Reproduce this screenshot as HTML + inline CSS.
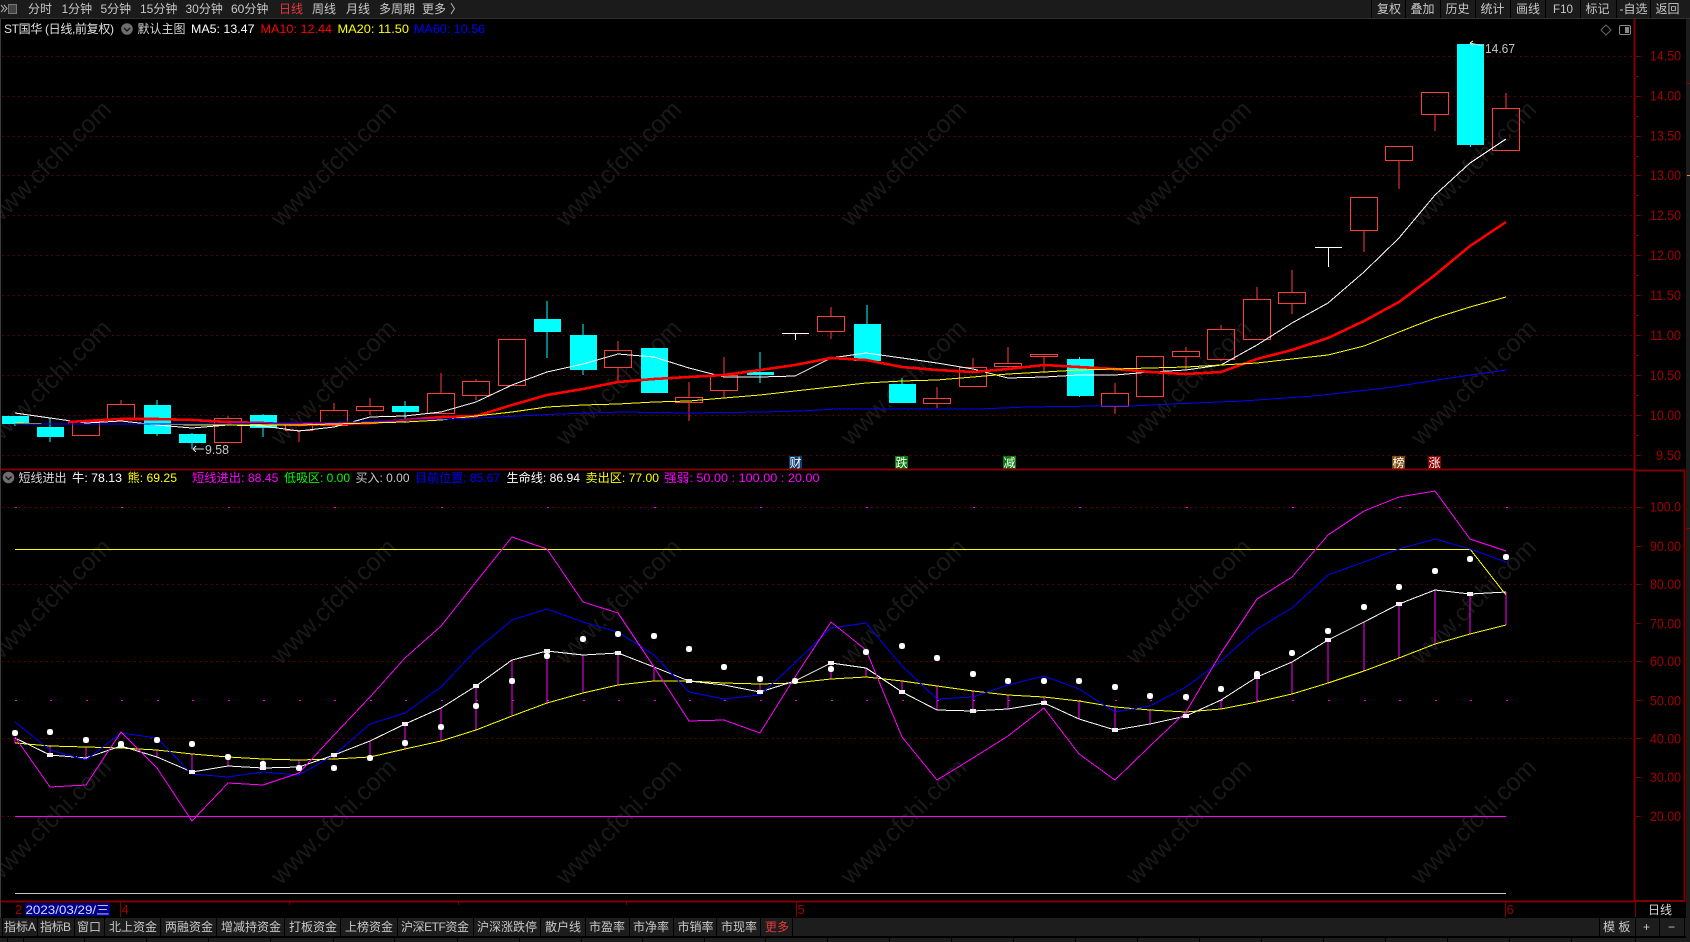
<!DOCTYPE html>
<html><head><meta charset="utf-8"><title>ST国华</title>
<style>
html,body{margin:0;padding:0;background:#000;width:1690px;height:942px;overflow:hidden}
svg{display:block}
text{font-family:"Liberation Sans","Noto Sans CJK SC","WenQuanYi Zen Hei",sans-serif;font-size:12px}
.w text{font-size:25px;fill:#191919;text-anchor:middle}
.t text{fill:#c8c8c8}
.a text{fill:#a00000;font-size:14px}
.l{fill:none;shape-rendering:crispEdges}
</style></head><body>
<svg width="1690" height="942" viewBox="0 0 1690 942" xmlns="http://www.w3.org/2000/svg">
<rect width="1690" height="942" fill="#000"/>

<g class="w" transform="translate(-6 6)">
<text x="54" y="166" transform="rotate(-45 54 157)">www.cfchi.com</text><text x="339" y="166" transform="rotate(-45 339 157)">www.cfchi.com</text><text x="624" y="166" transform="rotate(-45 624 157)">www.cfchi.com</text><text x="909" y="166" transform="rotate(-45 909 157)">www.cfchi.com</text><text x="1194" y="166" transform="rotate(-45 1194 157)">www.cfchi.com</text><text x="1479" y="166" transform="rotate(-45 1479 157)">www.cfchi.com</text>
<text x="54" y="385" transform="rotate(-45 54 376)">www.cfchi.com</text><text x="339" y="385" transform="rotate(-45 339 376)">www.cfchi.com</text><text x="624" y="385" transform="rotate(-45 624 376)">www.cfchi.com</text><text x="909" y="385" transform="rotate(-45 909 376)">www.cfchi.com</text><text x="1194" y="385" transform="rotate(-45 1194 376)">www.cfchi.com</text><text x="1479" y="385" transform="rotate(-45 1479 376)">www.cfchi.com</text>
<text x="54" y="604" transform="rotate(-45 54 595)">www.cfchi.com</text><text x="339" y="604" transform="rotate(-45 339 595)">www.cfchi.com</text><text x="624" y="604" transform="rotate(-45 624 595)">www.cfchi.com</text><text x="909" y="604" transform="rotate(-45 909 595)">www.cfchi.com</text><text x="1194" y="604" transform="rotate(-45 1194 595)">www.cfchi.com</text><text x="1479" y="604" transform="rotate(-45 1479 595)">www.cfchi.com</text>
<text x="54" y="824" transform="rotate(-45 54 815)">www.cfchi.com</text><text x="339" y="824" transform="rotate(-45 339 815)">www.cfchi.com</text><text x="624" y="824" transform="rotate(-45 624 815)">www.cfchi.com</text><text x="909" y="824" transform="rotate(-45 909 815)">www.cfchi.com</text><text x="1194" y="824" transform="rotate(-45 1194 815)">www.cfchi.com</text><text x="1479" y="824" transform="rotate(-45 1479 815)">www.cfchi.com</text>
</g>

<!-- grid -->
<path class="l" stroke="#7a0000" stroke-width="1" stroke-dasharray="1.5 4" d="M2 56.5H1634M2 96.5H1634M2 136.5H1634M2 175.5H1634M2 215.5H1634M2 255.5H1634M2 295.5H1634M2 335.5H1634M2 375.5H1634M2 415.5H1634M2 455.5H1634M2 507.5H1634M2 584.5H1634M2 661.5H1634M2 738.5H1634M2 816.5H14"/>

<!-- red candles -->
<path class="l" stroke="#ff3c3c" stroke-width="1.1" d="
M72.5 421.5H99.5V435.5H72.5ZM107.5 404.5H134.5V419.5H107.5ZM121 400V404M214.5 418.5H241.5V442.5H214.5ZM228 416V418
M285.5 423.5H312.5V430.5H285.5ZM299 431V442M320.5 410.5H347.5V425.5H320.5ZM334 403V410M356.5 406.5H383.5V410.5H356.5ZM370 398V406M370 411V415
M427.5 393.5H454.5V413.5H427.5ZM441 373V393M462.5 381.5H489.5V395.5H462.5ZM476 379V381M476 396V400M498.5 339.5H525.5V385.5H498.5Z
M604.5 350.5H631.5V367.5H604.5ZM618 341V350M618 368V382M675.5 397.5H702.5V402.5H675.5ZM689 382V397M689 403V421M710.5 375.5H737.5V390.5H710.5ZM724 357V375M724 391V398
M817.5 316.5H844.5V331.5H817.5ZM831 307V316M831 332V339M923.5 398.5H950.5V403.5H923.5ZM937 387V398M937 404V408M959.5 367.5H986.5V386.5H959.5ZM973 358V367
M994.5 363.5H1021.5V366.5H994.5ZM1008 347V363M1008 367V370M1030.5 354.5H1057.5V356.5H1030.5ZM1044 357V373M1101.5 393.5H1128.5V406.5H1101.5ZM1115 383V393M1115 407V414
M1136.5 356.5H1163.5V396.5H1136.5ZM1172.5 351.5H1199.5V356.5H1172.5ZM1186 347V351M1186 357V370M1207.5 329.5H1234.5V359.5H1207.5ZM1221 325V329M1221 360V361
M1243.5 299.5H1270.5V339.5H1243.5ZM1257 287V299M1278.5 292.5H1305.5V303.5H1278.5ZM1292 270V292M1292 304V314
M1350.5 197.5H1377.5V230.5H1350.5ZM1364 231V252M1385.5 146.5H1412.5V160.5H1385.5ZM1399 161V189M1421.5 92.5H1448.5V114.5H1421.5ZM1435 115V131M1492.5 108.5H1519.5V150.5H1492.5ZM1506 93V108"/>

<!-- cyan candles -->
<g fill="#00ffff" shape-rendering="crispEdges">
<rect x="2" y="416" width="27" height="8"/><rect x="14.5" y="424" width="1" height="2"/>
<rect x="37" y="427" width="27" height="10"/><rect x="49.5" y="418" width="1" height="24"/>
<rect x="144" y="405" width="27" height="29"/><rect x="156.5" y="400" width="1" height="36"/>
<rect x="179" y="434" width="27" height="9"/><rect x="191.5" y="433" width="1" height="16"/>
<rect x="250" y="415" width="27" height="13"/><rect x="262.5" y="414" width="1" height="23"/>
<rect x="392" y="406" width="27" height="6"/><rect x="404.5" y="401" width="1" height="22"/>
<rect x="534" y="319" width="27" height="13"/><rect x="546.5" y="301" width="1" height="57"/>
<rect x="570" y="335" width="27" height="35"/><rect x="582.5" y="324" width="1" height="51"/>
<rect x="641" y="348" width="27" height="45"/>
<rect x="747" y="372" width="27" height="3"/><rect x="759.5" y="352" width="1" height="31"/>
<rect x="854" y="324" width="27" height="37"/><rect x="866.5" y="305" width="1" height="19"/>
<rect x="889" y="384" width="27" height="19"/><rect x="901.5" y="378" width="1" height="6"/>
<rect x="1067" y="359" width="27" height="37"/><rect x="1079" y="357" width="1" height="40"/>
<rect x="1457" y="44" width="27" height="101"/><rect x="1470" y="145" width="1" height="2"/>
</g>
<!-- doji -->
<path class="l" stroke="#fff" stroke-width="1" d="M782 333.5H809M795.5 333V340M1315 247.5H1342M1328.5 247V267"/>

<!-- MA lines -->
<polyline class="l" stroke="#ffffff" stroke-width="1" points="15,413 50,418 86,423 121,421 157,425 192,428 228,425 263,426 299,431 334,427 370,417 405,416 441,412 476,402 512,385 547,372 583,364 618,354 654,357 689,368 724,377 760,377 795,376 831,358 866,353 902,358 937,363 973,369 1008,378 1044,377 1079,375 1115,375 1150,372 1186,370 1221,365 1257,345 1292,323 1328,303 1364,272 1399,238 1435,195 1470,163 1506,139"/>
<polyline class="l" stroke="#ff0000" stroke-width="2.6" points="68,422 121,419 157,419 192,420 228,422 263,423 299,425 334,424 370,423 405,420 441,417 476,416 512,405 547,395 583,389 618,382 654,379 689,377 724,375 760,370 795,365 831,358 866,360 902,367 937,370 973,372 1008,369 1044,365 1079,367 1115,369 1150,372 1186,374 1221,372 1257,359 1292,350 1328,338 1364,321 1399,302 1435,275 1470,246 1506,222"/>
<polyline class="l" stroke="#ffff00" stroke-width="1" points="15,423 50,424 86,424 121,424 157,424 192,425 228,425 263,425 299,425 334,424 370,423 405,422 441,420 476,416 512,412 547,407 583,405 618,404 654,402 689,401 724,398 760,395 795,391 831,387 866,383 902,381 937,380 973,377 1008,374 1044,372 1079,370 1115,369 1150,368 1186,367 1221,365 1257,363 1292,359 1328,355 1364,346 1399,332 1435,318 1470,307 1506,297"/>
<polyline class="l" stroke="#0000ff" stroke-width="1" points="15,424 104,424 214,424 286,423 357,422 403,420 446,419 479,418 518,416 560,414 621,412 689,413 764,412 800,411 836,409 978,409 1028,407 1096,406 1132,406 1171,404 1243,401 1314,396 1386,388 1457,377 1506,370"/>

<!-- high/low marks -->
<path class="l" stroke="#d8d8d8" stroke-width="1" d="M193 449H204M193 449L196 446M193 449L196 452M1470 43L1483 46M1470 43L1473 41M1470 43L1473 46"/>
<g class="t"><text x="205" y="454" textLength="24" lengthAdjust="spacingAndGlyphs" style="font-size:13px">9.58</text>
<text x="1485" y="53" textLength="30" lengthAdjust="spacingAndGlyphs" style="font-size:13px">14.67</text></g>

<!-- event tags -->
<rect x="789" y="456" width="13" height="13" fill="#0c3f70"/><rect x="895" y="456" width="13" height="13" fill="#0a7a0a"/><rect x="1003" y="456" width="13" height="13" fill="#0a7a0a"/><rect x="1392" y="456" width="13" height="13" fill="#7a4a10"/><rect x="1428" y="456" width="13" height="13" fill="#8b0000"/>
<g fill="#fff"><text x="789.5" y="467" fill="#fff">财</text><text x="895.5" y="467" fill="#fff">跌</text><text x="1003.5" y="467" fill="#fff">减</text><text x="1392.5" y="467" fill="#fff">榜</text><text x="1428.5" y="467" fill="#fff">涨</text></g>

<!-- panel separator and axis -->
<path class="l" stroke="#800000" stroke-width="1.6" d="M0 469.5H1635M0 901.5H1635"/>
<path class="l" stroke="#800000" stroke-width="2" d="M1634.5 19V901M1635 901H1684.5V470.5H1634"/>
<path class="l" stroke="#800000" stroke-width="1" d="M1636 56.5h5M1636 76.5h3M1636 96.5h5M1636 116.5h3M1636 136.5h5M1636 156.5h3M1636 175.5h5M1636 195.5h3M1636 215.5h5M1636 235.5h3M1636 255.5h5M1636 275.5h3M1636 295.5h5M1636 315.5h3M1636 335.5h5M1636 355.5h3M1636 375.5h5M1636 395.5h3M1636 415.5h5M1636 435.5h3M1636 455.5h5M1636 507.5h5M1636 546.5h5M1636 584.5h5M1636 623.5h5M1636 661.5h5M1636 700.5h5M1636 738.5h5M1636 777.5h5M1636 816.5h5"/>
<g class="a">
<text x="1650" y="60.5" textLength="31" lengthAdjust="spacingAndGlyphs">14.50</text>
<text x="1650" y="100.5" textLength="31" lengthAdjust="spacingAndGlyphs">14.00</text>
<text x="1650" y="140.5" textLength="31" lengthAdjust="spacingAndGlyphs">13.50</text>
<text x="1650" y="180" textLength="31" lengthAdjust="spacingAndGlyphs">13.00</text>
<text x="1650" y="220" textLength="31" lengthAdjust="spacingAndGlyphs">12.50</text>
<text x="1650" y="260" textLength="31" lengthAdjust="spacingAndGlyphs">12.00</text>
<text x="1650" y="300" textLength="31" lengthAdjust="spacingAndGlyphs">11.50</text>
<text x="1650" y="340" textLength="31" lengthAdjust="spacingAndGlyphs">11.00</text>
<text x="1650" y="380" textLength="31" lengthAdjust="spacingAndGlyphs">10.50</text>
<text x="1650" y="420" textLength="31" lengthAdjust="spacingAndGlyphs">10.00</text>
<text x="1656" y="460" textLength="25" lengthAdjust="spacingAndGlyphs">9.50</text>
<text x="1650" y="511.5" textLength="31" lengthAdjust="spacingAndGlyphs">100.0</text>
<text x="1650" y="551" textLength="31" lengthAdjust="spacingAndGlyphs">90.00</text>
<text x="1650" y="589" textLength="31" lengthAdjust="spacingAndGlyphs">80.00</text>
<text x="1650" y="628.5" textLength="31" lengthAdjust="spacingAndGlyphs">70.00</text>
<text x="1650" y="666" textLength="31" lengthAdjust="spacingAndGlyphs">60.00</text>
<text x="1650" y="705.5" textLength="31" lengthAdjust="spacingAndGlyphs">50.00</text>
<text x="1650" y="743.5" textLength="31" lengthAdjust="spacingAndGlyphs">40.00</text>
<text x="1650" y="782" textLength="31" lengthAdjust="spacingAndGlyphs">30.00</text>
<text x="1650" y="821" textLength="31" lengthAdjust="spacingAndGlyphs">20.00</text>
</g>

<!-- indicator: reference dots, horizontals -->
<path class="l" stroke="#ff00ff" stroke-width="1" d="M15 700.5h2M50 700.5h2M86 700.5h2M121 700.5h2M157 700.5h2M192 700.5h2M228 700.5h2M263 700.5h2M299 700.5h2M334 700.5h2M370 700.5h2M405 700.5h2M441 700.5h2M476 700.5h2M512 700.5h2M547 700.5h2M583 700.5h2M618 700.5h2M654 700.5h2M689 700.5h2M724 700.5h2M760 700.5h2M795 700.5h2M831 700.5h2M866 700.5h2M902 700.5h2M937 700.5h2M973 700.5h2M1008 700.5h2M1044 700.5h2M1079 700.5h2M1115 700.5h2M1150 700.5h2M1186 700.5h2M1221 700.5h2M1257 700.5h2M1292 700.5h2M1328 700.5h2M1364 700.5h2M1399 700.5h2M1435 700.5h2M1470 700.5h2M1506 700.5h2M15 507.5h2M121 507.5h2M228 507.5h2M334 507.5h2M441 507.5h2M547 507.5h2M654 507.5h2M760 507.5h2M866 507.5h2M973 507.5h2M1079 507.5h2M1186 507.5h2M1292 507.5h2M1399 507.5h2M1506 507.5h2"/>
<path class="l" stroke="#ffff00" stroke-width="1" d="M15 549.5H1470"/>
<polyline class="l" stroke="#ffff00" stroke-width="1" points="1470,549 1506,595"/>
<path class="l" stroke="#ff00ff" stroke-width="1" d="M15 816.5H1506"/>
<path class="l" stroke="#c8c8c8" stroke-width="1" d="M15 893.5H1506"/>

<!-- sticks -->
<path class="l" stroke="#ff00ff" stroke-width="1.3" d="M15 738V743M50 745V755M86 747V758M121 746V748M157 750V757M192 754V772M228 757V766M263 759V768M299 760V767M334 755V759M370 741V757M405 724V749M441 708V741M476 686V730M512 660V716M547 651V703M583 655V693M618 653V685M654 667V681M724 683V685M760 684V692M831 663V679M866 668V677M902 681V692M937 686V710M973 691V711M1008 695V709M1044 697V703M1079 701V719M1115 707V730M1150 710V724M1186 712V716M1221 700V709M1257 677V702M1292 662V694M1328 640V683M1364 622V671M1399 604V658M1435 590V644M1470 594V634M1506 592V625"/>

<!-- indicator lines -->
<polyline class="l" stroke="#ffff00" stroke-width="1" points="15,743 50,746 86,747 121,748 157,750 192,754 228,757 263,759 299,760 334,759 370,757 405,749 441,741 476,730 512,716 547,703 583,693 618,685 654,681 689,681 724,683 760,684 795,683 831,679 866,677 902,681 937,686 973,691 1008,695 1044,697 1079,701 1115,707 1150,710 1186,712 1221,709 1257,702 1292,694 1328,683 1364,671 1399,658 1435,644 1470,634 1506,625"/>
<polyline class="l" stroke="#ffffff" stroke-width="1" points="15,738 50,755 86,758 121,746 157,757 192,772 228,766 263,768 299,767 334,755 370,741 405,724 441,708 476,686 512,660 547,651 583,655 618,653 654,667 689,681 724,685 760,692 795,681 831,663 866,668 902,692 937,710 973,711 1008,709 1044,703 1079,719 1115,730 1150,724 1186,716 1221,700 1257,677 1292,662 1328,640 1364,622 1399,604 1435,590 1470,594 1506,592"/>
<polyline class="l" stroke="#0000ff" stroke-width="1" points="15,722 50,750 86,760 121,733 157,738 192,774 228,777 263,772 299,775 334,755 370,724 405,713 441,687 476,650 512,620 547,609 583,622 618,632 654,655 689,692 724,699 760,695 795,663 831,628 866,623 902,666 937,699 973,697 1008,685 1044,676 1079,689 1115,712 1150,706 1186,687 1221,661 1257,629 1292,608 1328,575 1364,562 1399,549 1435,539 1470,549 1506,562"/>
<polyline class="l" stroke="#ff00ff" stroke-width="1" points="15,737 50,787 86,785 121,732 157,768 192,821 228,783 263,785 299,773 334,735 370,697 405,658 441,626 476,582 512,537 547,549 583,602 618,613 654,667 689,721 724,720 760,733 795,677 831,622 866,650 902,737 937,780 973,758 1008,736 1044,708 1079,754 1115,780 1150,746 1186,712 1221,653 1257,599 1292,577 1328,535 1364,511 1399,497 1435,491 1470,539 1506,551"/>

<!-- white squares at odd bars -->
<path class="l" stroke="#f0f0f0" stroke-width="4" d="M47 755h6M118 746h6M189 772h6M260 768h6M331 755h6M402 724h6M473 686h6M544 651h6M615 653h6M686 681h6M757 692h6M828 663h6M899 692h6M970 711h6M1041 703h6M1112 730h6M1183 716h6M1254 677h6M1325 640h6M1396 604h6M1467 594h6"/>

<!-- diamonds -->
<path fill="none" stroke="#ffffff" stroke-width="6.5" stroke-linecap="round" shape-rendering="crispEdges" d="M15 733h.01M50 732h.01M86 740h.01M121 744h.01M157 740h.01M192 744h.01M228 757h.01M263 764h.01M299 768h.01M334 768h.01M370 758h.01M405 743h.01M441 727h.01M476 706h.01M512 681h.01M547 656h.01M583 639h.01M618 634h.01M654 636h.01M689 649h.01M724 667h.01M760 679h.01M795 681h.01M831 669h.01M866 652h.01M902 646h.01M937 658h.01M973 674h.01M1008 681h.01M1044 681h.01M1079 681h.01M1115 687h.01M1150 696h.01M1186 697h.01M1221 689h.01M1257 674h.01M1292 653h.01M1328 631h.01M1364 607h.01M1399 587h.01M1435 571h.01M1470 559h.01M1506 557h.01"/>

<!-- edges -->
<rect x="0" y="19" width="1" height="899" fill="#3a3a3a"/>
<rect x="1686" y="19" width="4" height="923" fill="#1c1c1c"/>
<rect x="1687" y="83" width="3" height="1" fill="#a00000"/><rect x="1687" y="175" width="3" height="1" fill="#e09030"/><rect x="1687" y="528" width="3" height="1" fill="#a00000"/>

<!-- top bar -->
<rect x="0" y="0" width="1690" height="18" fill="#1b1b1b"/>
<rect x="0" y="18" width="1690" height="1" fill="#303030"/>
<path class="l" stroke="#000" stroke-width="1" d="M1371.5 0V18M1405.5 0V18M1440.5 0V18M1475.5 0V18M1510.5 0V18M1545.5 0V18M1580.5 0V18M1616.5 0V18M1650.5 0V18"/>
<path fill="none" stroke="#aaa" stroke-width="1" d="M1 5l3 3.5-3 3.5M4 5l3 3.5-3 3.5"/>
<rect x="8.5" y="4.5" width="8" height="9" fill="#444" stroke="#777"/>
<g class="t">
<text x="28" y="13">分时</text>
<text x="61.5" y="13">1分钟</text>
<text x="100.5" y="13">5分钟</text>
<text x="140" y="13">15分钟</text>
<text x="185.5" y="13">30分钟</text>
<text x="231" y="13">60分钟</text>
<text x="279" y="13" style="fill:#e8383a">日线</text>
<text x="312" y="13">周线</text>
<text x="346" y="13">月线</text>
<text x="379" y="13">多周期</text>
<text x="422" y="13">更多</text>
<text x="450" y="13">〉</text>
<text x="1377" y="13">复权</text>
<text x="1410.5" y="13">叠加</text>
<text x="1445.5" y="13">历史</text>
<text x="1480.5" y="13">统计</text>
<text x="1516" y="13">画线</text>
<text x="1553" y="13" textLength="20" lengthAdjust="spacingAndGlyphs">F10</text>
<text x="1585.5" y="13">标记</text>
<text x="1619.5" y="13">-自选</text>
<text x="1655.5" y="13">返回</text>
</g>
<path fill="none" stroke="#666" d="M1606 25l5 5-5 5-5-5z"/>
<rect x="1619.5" y="25.5" width="11" height="9" rx="1.5" fill="none" stroke="#888"/><rect x="1625" y="27" width="4" height="6" fill="#888"/>

<!-- main header -->
<text x="4" y="33" fill="#e0e0e0" textLength="110" lengthAdjust="spacing">ST国华 (日线,前复权)</text>
<circle cx="127" cy="29" r="5.8" fill="#6e6e6e"/><path d="M124 28l3 3 3-3" fill="none" stroke="#111" stroke-width="1.3"/>
<text x="137.5" y="33" fill="#d8d8d8">默认主图</text>
<text x="191" y="33" fill="#ffffff" textLength="63.5" lengthAdjust="spacingAndGlyphs">MA5: 13.47</text>
<text x="260.5" y="33" fill="#ff0000" textLength="71.5" lengthAdjust="spacingAndGlyphs">MA10: 12.44</text>
<text x="337.5" y="33" fill="#ffff00" textLength="71.5" lengthAdjust="spacingAndGlyphs">MA20: 11.50</text>
<text x="414" y="33" fill="#0000ff" textLength="71" lengthAdjust="spacingAndGlyphs">MA60: 10.56</text>

<!-- indicator header -->
<circle cx="8.5" cy="477.5" r="5.8" fill="#6e6e6e"/><path d="M5.5 476.5l3 3 3-3" fill="none" stroke="#111" stroke-width="1.3"/>
<text x="18.5" y="482" fill="#d8d8d8">短线进出</text>
<text x="72" y="482" fill="#ffffff" textLength="50" lengthAdjust="spacingAndGlyphs">牛: 78.13</text>
<text x="127.5" y="482" fill="#ffff00" textLength="49.5" lengthAdjust="spacingAndGlyphs">熊: 69.25</text>
<text x="192" y="482" fill="#ff00ff" textLength="86.5" lengthAdjust="spacingAndGlyphs">短线进出: 88.45</text>
<text x="284" y="482" fill="#00ff00" textLength="66" lengthAdjust="spacingAndGlyphs">低吸区: 0.00</text>
<text x="355.5" y="482" fill="#c8c8c8" textLength="54" lengthAdjust="spacingAndGlyphs">买入: 0.00</text>
<text x="415" y="482" fill="#0000ff" textLength="85" lengthAdjust="spacingAndGlyphs">目前位置: 85.67</text>
<text x="506.5" y="482" fill="#ffffff" textLength="73.5" lengthAdjust="spacingAndGlyphs">生命线: 86.94</text>
<text x="585.5" y="482" fill="#ffff00" textLength="73.5" lengthAdjust="spacingAndGlyphs">卖出区: 77.00</text>
<text x="664" y="482" fill="#ff00ff" textLength="155.5" lengthAdjust="spacingAndGlyphs">强弱: 50.00 : 100.00 : 20.00</text>

<!-- date axis -->
<path class="l" stroke="#800000" stroke-width="1" d="M120.5 902V917M796.5 902V917M1505.5 902V917M289.5 902v3M458.5 902v3M626.5 902v3M1635.5 902V917"/>
<text x="15" y="914" style="font-size:13px" fill="#a00000">2</text>
<rect x="25" y="903" width="85" height="13" fill="#00008b"/>
<text x="25.5" y="914" fill="#d8d8ff" textLength="84" lengthAdjust="spacingAndGlyphs">2023/03/29/三</text>
<text x="121.5" y="914" style="font-size:13px" fill="#a00000">4</text>
<text x="797.5" y="914" style="font-size:13px" fill="#a00000">5</text>
<text x="1506.5" y="914" style="font-size:13px" fill="#a00000">6</text>
<text x="1648" y="914" fill="#d8d8d8">日线</text>

<!-- bottom toolbar -->
<rect x="0" y="918" width="1686" height="18" fill="#1d1d1d"/>
<path class="l" stroke="#000" stroke-width="1" d="M2.5 918V936M37.5 918V936M74.5 918V936M104.5 918V936M160.5 918V936M216.5 918V936M284.5 918V936M340.5 918V936M397.5 918V936M473.5 918V936M540.5 918V936M585.5 918V936M629.5 918V936M673.5 918V936M716.5 918V936M760.5 918V936M792.5 918V936M1599.5 918V936M1635.5 918V936M1659.5 918V936M1684.5 918V936"/>
<g class="t">
<text x="4" y="931" textLength="32" lengthAdjust="spacing">指标A</text>
<text x="40" y="931" textLength="31" lengthAdjust="spacing">指标B</text>
<text x="77" y="931">窗口</text>
<text x="109" y="931">北上资金</text>
<text x="165" y="931">两融资金</text>
<text x="221" y="931">增减持资金</text>
<text x="289" y="931">打板资金</text>
<text x="345" y="931">上榜资金</text>
<text x="401" y="931" textLength="68" lengthAdjust="spacing">沪深ETF资金</text>
<text x="477" y="931">沪深涨跌停</text>
<text x="545" y="931">散户线</text>
<text x="589" y="931">市盈率</text>
<text x="633" y="931">市净率</text>
<text x="677.5" y="931">市销率</text>
<text x="721" y="931">市现率</text>
<text x="765" y="931" style="fill:#e8383a">更多</text>
<text x="1603" y="931">模 板</text>
<text x="1643" y="931">+</text>
<text x="1668" y="931">−</text>
</g>
<rect x="0" y="938" width="1686" height="4" fill="#1d1d1d"/>
<path class="l" stroke="#000" stroke-width="1" d="M7.5 938V942M23.5 938V942M84.5 938V942M146.5 938V942M208.5 938V942M270.5 938V942M333.5 938V942M394.5 938V942M457.5 938V942M519.5 938V942M581.5 938V942M642.5 938V942M704.5 938V942M765.5 938V942M827.5 938V942M889.5 938V942M951.5 938V942M1013.5 938V942M1075.5 938V942M1137.5 938V942M1199.5 938V942M1261.5 938V942M1323.5 938V942M1385.5 938V942M1447.5 938V942M1509.5 938V942M1571.5 938V942M1635.5 938V942"/>
</svg>
</body></html>
